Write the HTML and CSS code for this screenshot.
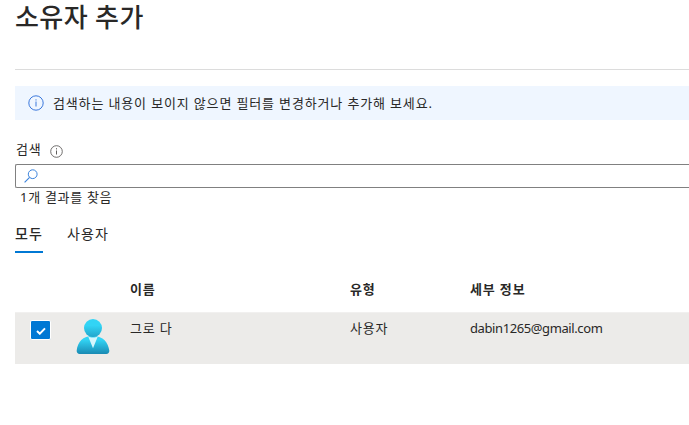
FILE: index.html
```html
<!DOCTYPE html>
<html lang="ko">
<head>
  <meta charset="UTF-8">
  <title>소유자 추가</title>
  <meta name="viewport" content="width=device-width, initial-scale=1.0">
  <link rel="stylesheet" href="styles.css">
</head>
<body>
  <header class="header">
    <h1>소유자 추가</h1>
  </header>

  <div class="notice">
    <svg class="info-icon" width="16" height="16" viewBox="0 0 16 16">
      <circle cx="8" cy="8" r="7.2" fill="none" stroke="currentColor"/>
      <path d="M8 6.500v5M8 4.300v1.200" stroke="currentColor"/>
    </svg>
    <span>검색하는 내용이 보이지 않으면 필터를 변경하거나 추가해 보세요.</span>
  </div>

  <div class="search-label">
    <label for="search">검색</label>
    <svg width="13" height="13" viewBox="0 0 13 13">
      <circle cx="6.5" cy="6.5" r="5.8" fill="none" stroke="currentColor" stroke-width=".9"/>
      <path d="M6.5 5.5v4M6.5 3.2v1.2" stroke="currentColor"/>
    </svg>
  </div>
  <div class="search-box">
    <svg width="14" height="14" viewBox="0 0 14 14">
      <circle cx="8.7" cy="5.2" r="4.4" fill="none" stroke="currentColor"/>
      <path d="M5.6 8.4L.6 13.4" stroke="currentColor" stroke-width="1.1"/>
    </svg>
    <input id="search" type="text">
  </div>
  <p class="result-count">1개 결과를 찾음</p>

  <nav class="tabs">
    <a class="tab active">모두</a>
    <a class="tab">사용자</a>
  </nav>

  <div class="table">
    <div class="row head">
      <span></span>
      <span></span>
      <span>이름</span>
      <span>유형</span>
      <span>세부 정보</span>
    </div>
    <div class="row selected">
      <span class="checkbox">
        <svg width="10" height="8" viewBox="0 0 10 8">
          <path d="M1 4l2.8 2.7L9 1.400" fill="none" stroke="#fff" stroke-width="2"/>
        </svg>
      </span>
      <svg class="avatar" width="34" height="36" viewBox="0 0 34 36">
        <defs>
          <linearGradient id="body" x1="0" y1="0" x2="0" y2="1">
            <stop offset=".2" stop-color="#32d4f5"/>
            <stop offset="1" stop-color="#198ab3"/>
          </linearGradient>
          <linearGradient id="face" x1="0" y1="0" x2="0" y2="1">
            <stop offset=".35" stop-color="#32d4f5"/>
            <stop offset="1" stop-color="#22a5cb"/>
          </linearGradient>
        </defs>
        <path d="M30.300 35a3 3 0 0 0 3-3.400C32.200 23.600 27.500 17 17 17S1.700 23 .7 31.600a3 3 0 0 0 3 3.400z" fill="url(#body)"/>
        <path d="M17 18.500c-2 0-3.400-.3-4.800-1L17 29.200l4.800-11.700c-1.400.7-2.900 1-4.800 1z" fill="#d5f6fd"/>
        <circle cx="17" cy="9.100" r="9" fill="url(#face)"/>
      </svg>
      <span>그로 다</span>
      <span>사용자</span>
      <span class="mail">dabin1265@gmail.com</span>
    </div>
  </div>
</body>
</html>
```
FILE: styles.css
```css
* {
  box-sizing: border-box;
}

body {
  margin: 0;
  padding-left: 15px;
  height: 425px;
  overflow: hidden;
  background: #fff;
  color: #292827;
  font-family: "Noto Sans", "Noto Sans CJK KR", sans-serif;
  font-size: 13px;
  line-height: 18px;
  letter-spacing: 0.85px;
}

.header {
  height: 70px;
  border-bottom: 1px solid #dcdcdc;
}

h1 {
  margin: 0;
  font-size: 26px;
  font-weight: 500;
  line-height: 34px;
  letter-spacing: 0.4px;
}

.notice {
  display: flex;
  align-items: center;
  gap: 9px;
  height: 34px;
  margin-top: 16px;
  padding-left: 13px;
  background: #eff6ff;
}

.notice span {
  padding-bottom: 1px;
}

.info-icon {
  color: #3b78dc;
}

.search-label {
  display: flex;
  align-items: center;
  gap: 8px;
  height: 18px;
  margin-top: 20px;
  padding-left: 1px;
}

.search-label svg {
  margin-top: 4px;
  color: #605e5c;
}

.search-box {
  display: flex;
  align-items: center;
  height: 24px;
  margin-top: 6px;
  padding-left: 8px;
  border: 1px solid #808080;
  border-right: 0;
  border-radius: 2px 0 0 2px;
  color: #3b83dc;
}

.search-box input {
  flex: 1;
  border: 0;
  outline: 0;
  background: none;
}

.result-count {
  margin: 0 0 0 5px;
  letter-spacing: 0.7px;
}

.tabs {
  display: flex;
  gap: 24px;
  height: 34px;
  margin-top: 13px;
}

.tab {
  padding-top: 6px;
  font-size: 14px;
  letter-spacing: 1.1px;
}

.tab.active {
  border-bottom: 2px solid #0078d4;
  font-weight: 500;
}

.table {
  margin-top: 14px;
}

.row {
  display: grid;
  grid-template-columns: 61px 54px 220px 120px 1fr;
}

.head {
  height: 45px;
  padding-top: 13px;
  font-weight: 700;
}

.selected {
  height: 52px;
  padding-top: 6px;
  border-top: 1px solid #f1f0ef;
  background: #ecebe9;
}

.checkbox {
  display: flex;
  align-items: center;
  justify-content: center;
  width: 21px;
  height: 20px;
  margin: 1px 0 0 15px;
  padding-top: 2px;
  border: 1px solid #fff;
  border-radius: 2px;
  background: #0078d4;
}

.mail {
  letter-spacing: -0.4px;
}
```
